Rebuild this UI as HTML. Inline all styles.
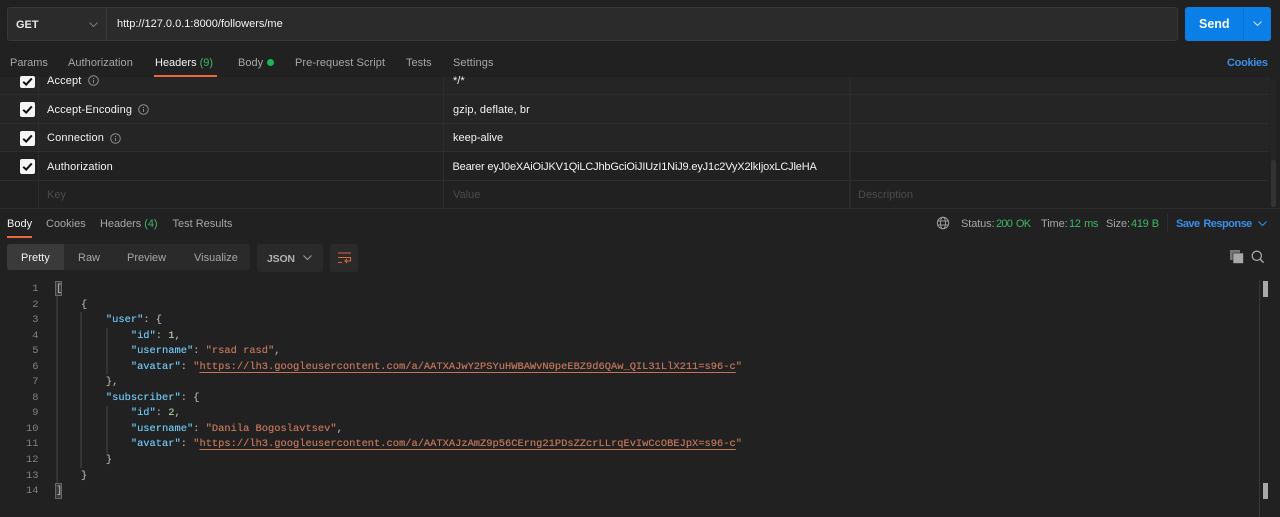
<!DOCTYPE html>
<html><head><meta charset="utf-8"><style>
html,body{margin:0;padding:0;background:#212121;width:1280px;height:517px;overflow:hidden}
body{position:relative;font-family:"Liberation Sans",sans-serif;font-size:11px;color:#a6a6a6}
.t{position:absolute;white-space:pre;line-height:14px}
.b{position:absolute}
.w{color:#f2f2f2}.d{color:#a6a6a6}.g{color:#4b4b4b}.grn{color:#3fb56a}.blu{color:#3a8ee6}
.m{position:absolute;left:56px;white-space:pre;font-family:"Liberation Mono",monospace;font-size:10.4px;line-height:15px;color:#a8a8a8;text-shadow:0 0 .4px currentColor}
.n{position:absolute;width:38.5px;text-align:right;left:0;font-family:"Liberation Mono",monospace;font-size:10.4px;line-height:15px;color:#808080}
.k{color:#6fc3f0}.s{color:#c0745a}.u{color:#c0745a;text-decoration:underline;text-decoration-thickness:1px;text-underline-offset:2.5px}.v{color:#a8c8a0}
.cb{position:absolute;left:19.5px;width:15px;height:15px;background:#f5f5f5;border-radius:2px;overflow:hidden}
.cb svg{position:absolute;left:0;top:0}
.i{position:absolute}
.h{letter-spacing:.13px}
</style></head><body>
<div class="b" style="left:7px;top:7px;width:1171px;height:34px;background:#2b2b2b;border:1px solid #383838;border-radius:3px;box-sizing:border-box"></div>
<div class="b" style="left:106px;top:8px;width:1px;height:32px;background:#383838"></div>
<div class="t" style="left:16px;top:18px;font-weight:bold;color:#e6e6e6;font-size:11px">GET</div>
<svg class="i" style="left:88px;top:20px" width="12" height="10"><path d="M1.5 2.5L5.5 6.5L9.5 2.5" fill="none" stroke="#7a7a7a"/></svg>
<div class="t w" style="left:117px;top:17px">http://127.0.0.1:8000/followers/me</div>
<div class="b" style="left:1185px;top:7px;width:86px;height:34px;background:#0a7fe8;border-radius:3px"></div>
<div class="b" style="left:1243px;top:7px;width:1px;height:34px;background:#0a70d0"></div>
<div class="t" style="left:1199px;top:17px;font-weight:bold;color:#fff;font-size:12.5px">Send</div>
<svg class="i" style="left:1252px;top:19px" width="12" height="10"><path d="M1.5 2.5L5.5 6.5L9.5 2.5" fill="none" stroke="#d5e8fb"/></svg>

<div class="t d" style="left:10px;top:56px">Params</div>
<div class="t d" style="left:68px;top:56px;letter-spacing:.05px">Authorization</div>
<div class="t w" style="left:155px;top:56px">Headers <span class="grn">(9)</span></div>
<div class="b" style="left:154px;top:75px;width:63px;height:2px;background:#e8683f"></div>
<div class="t d" style="left:238px;top:56px">Body</div>
<div class="b" style="left:267px;top:59px;width:7px;height:7px;border-radius:50%;background:#1fb45a"></div>
<div class="t d" style="left:295px;top:56px;letter-spacing:.08px">Pre-request Script</div>
<div class="t d" style="left:406px;top:56px">Tests</div>
<div class="t d" style="left:453px;top:56px;letter-spacing:.1px">Settings</div>
<div class="t blu" style="left:1227px;top:56px;font-weight:bold;letter-spacing:-.3px">Cookies</div>

<div class="b" style="left:0;top:77px;width:1270px;height:75px;background:#252525"></div>
<div class="b" style="left:0;top:152px;width:1270px;height:57px;background:#212121"></div>
<div class="b" style="left:0;top:94px;width:1268px;height:1px;background:#2d2d2d"></div>
<div class="b" style="left:0;top:123px;width:1268px;height:1px;background:#2d2d2d"></div>
<div class="b" style="left:0;top:151px;width:1268px;height:1px;background:#2d2d2d"></div>
<div class="b" style="left:0;top:180px;width:1268px;height:1px;background:#2d2d2d"></div>
<div class="b" style="left:0;top:208px;width:1280px;height:1px;background:#2d2d2d"></div>
<div class="b" style="left:38px;top:77px;width:1px;height:131px;background:#2d2d2d"></div>
<div class="b" style="left:443px;top:77px;width:1px;height:131px;background:#2d2d2d"></div>
<div class="b" style="left:849px;top:77px;width:2px;height:131px;background:#2a2a2a"></div>
<div class="b" style="left:1271px;top:79px;width:5px;height:128px;background:#262626;border-radius:3px"></div>
<div class="b" style="left:1271px;top:160px;width:5px;height:47px;background:#333;border-radius:3px"></div>

<div class="cb" style="top:76px;height:12px"><svg style="top:-2px" width="15" height="15"><path d="M3.2 7.8L6.2 10.6L11.8 4.4" fill="none" stroke="#111" stroke-width="2"/></svg></div>
<div class="cb" style="top:102px"><svg width="15" height="15"><path d="M3.2 7.8L6.2 10.6L11.8 4.4" fill="none" stroke="#111" stroke-width="2"/></svg></div>
<div class="cb" style="top:130.5px"><svg width="15" height="15"><path d="M3.2 7.8L6.2 10.6L11.8 4.4" fill="none" stroke="#111" stroke-width="2"/></svg></div>
<div class="cb" style="top:159px"><svg width="15" height="15"><path d="M3.2 7.8L6.2 10.6L11.8 4.4" fill="none" stroke="#111" stroke-width="2"/></svg></div>

<div class="t w h" style="left:47px;top:74px">Accept</div>
<svg class="i" style="left:88px;top:75px" width="12" height="12"><circle cx="5.5" cy="5.5" r="4.8" fill="none" stroke="#8a8a8a"/><path d="M5.5 3v1M5.5 5v3" stroke="#8a8a8a"/></svg>
<div class="t w h" style="left:47px;top:102.5px">Accept-Encoding</div>
<svg class="i" style="left:138px;top:104px" width="12" height="12"><circle cx="5.5" cy="5.5" r="4.8" fill="none" stroke="#8a8a8a"/><path d="M5.5 3v1M5.5 5v3" stroke="#8a8a8a"/></svg>
<div class="t w h" style="left:47px;top:131px">Connection</div>
<svg class="i" style="left:109.5px;top:132.5px" width="12" height="12"><circle cx="5.5" cy="5.5" r="4.8" fill="none" stroke="#8a8a8a"/><path d="M5.5 3v1M5.5 5v3" stroke="#8a8a8a"/></svg>
<div class="t w h" style="left:47px;top:160px">Authorization</div>
<div class="t g" style="left:47px;top:188px">Key</div>
<div class="t w" style="left:453px;top:74px">*/*</div>
<div class="t w" style="left:453px;top:102.5px;letter-spacing:.1px">gzip, deflate, br</div>
<div class="t w" style="left:453px;top:131px">keep-alive</div>
<div class="t w" style="left:452.5px;top:160px;letter-spacing:-.17px">Bearer eyJ0eXAiOiJKV1QiLCJhbGciOiJIUzI1NiJ9.eyJ1c2VyX2lkIjoxLCJleHA</div>
<div class="t g" style="left:453px;top:188px">Value</div>
<div class="t g" style="left:858px;top:188px">Description</div>

<div class="t w" style="left:7px;top:217px">Body</div>
<div class="b" style="left:7px;top:236px;width:25px;height:2px;background:#e8683f"></div>
<div class="t d" style="left:46px;top:217px">Cookies</div>
<div class="t d" style="left:100px;top:217px;letter-spacing:-.05px">Headers <span class="grn">(4)</span></div>
<div class="t d" style="left:172.5px;top:217px">Test Results</div>

<svg class="i" style="left:936px;top:216px" width="14" height="14"><g fill="none" stroke="#9a9a9a"><circle cx="7" cy="7" r="5.7"/><ellipse cx="7" cy="7" rx="2.6" ry="5.7"/><path d="M1.5 5h11M1.5 9h11"/></g></svg>
<div class="t d" style="left:961px;top:217px;letter-spacing:-.1px">Status:</div>
<div class="t grn" style="left:996px;top:217px;letter-spacing:-.75px;word-spacing:1.5px">200 OK</div>
<div class="t d" style="left:1041px;top:217px;letter-spacing:-.1px">Time:</div>
<div class="t grn" style="left:1069px;top:217px;letter-spacing:-.4px;word-spacing:1px">12 ms</div>
<div class="t d" style="left:1106px;top:217px;letter-spacing:-.1px">Size:</div>
<div class="t grn" style="left:1131px;top:217px;letter-spacing:-.3px;word-spacing:.5px">419 B</div>
<div class="b" style="left:1167px;top:214px;width:1px;height:18px;background:#2d2d2d"></div>
<div class="t blu" style="left:1176px;top:217px;font-weight:bold;letter-spacing:-.52px;word-spacing:1.2px">Save Response</div>
<svg class="i" style="left:1257px;top:219px" width="12" height="10"><path d="M1.5 2.5L5.5 6.5L9.5 2.5" fill="none" stroke="#3a8ee6"/></svg>

<div class="b" style="left:7px;top:244px;width:243px;height:26px;background:#2a2a2a;border-radius:3px"></div>
<div class="b" style="left:7px;top:244px;width:57px;height:26px;background:#3a3a3a;border-radius:3px 0 0 3px"></div>
<div class="t w" style="left:21px;top:251px">Pretty</div>
<div class="t d" style="left:78px;top:251px">Raw</div>
<div class="t d" style="left:127px;top:251px">Preview</div>
<div class="t d" style="left:194px;top:251px">Visualize</div>
<div class="b" style="left:257px;top:244px;width:66px;height:28px;background:#2a2a2a;border-radius:3px"></div>
<div class="t" style="left:267px;top:252px;font-size:10.5px;font-weight:bold;color:#b0b0b0;letter-spacing:-.2px">JSON</div>
<svg class="i" style="left:302px;top:253px" width="12" height="10"><path d="M1.5 2.5L5.5 6.5L9.5 2.5" fill="none" stroke="#9a9a9a"/></svg>
<div class="b" style="left:330px;top:244px;width:28px;height:28px;background:#2a2a2a;border-radius:3px"></div>
<svg class="i" style="left:337.5px;top:252px" width="14" height="13"><g fill="none" stroke="#d9663f"><path d="M0 1h13M0 5.5h12.5v3.5h-5.5M9 7l-2 2 2 2M0 10.5h4" stroke-width="1.1"/></g></svg>

<svg class="i" style="left:1230px;top:250px" width="14" height="14"><rect x="0" y="0" width="10" height="10" fill="#777"/><rect x="3" y="3" width="10.5" height="10.5" fill="#a8a8a8" stroke="#212121" stroke-width=".6"/></svg>
<svg class="i" style="left:1251px;top:250px" width="14" height="14"><circle cx="5.8" cy="5.8" r="4.6" fill="none" stroke="#a8a8a8" stroke-width="1.3"/><path d="M9.2 9.2L12.6 12.6" stroke="#a8a8a8" stroke-width="1.4"/></svg>

<div class="b" style="left:1259px;top:280px;width:1px;height:237px;background:#383838"></div>
<div class="b" style="left:1263px;top:281px;width:5px;height:16px;background:#a8a8a8"></div>
<div class="b" style="left:1263px;top:483px;width:5px;height:16px;background:#a8a8a8"></div>

<div class="b" style="left:56px;top:296px;width:2px;height:187px;background:#343434"></div>
<div class="b" style="left:80px;top:312px;width:2px;height:156px;background:#343434"></div>
<div class="b" style="left:105.5px;top:328px;width:2px;height:46px;background:#343434"></div>
<div class="b" style="left:105.5px;top:406px;width:2px;height:47px;background:#343434"></div>
<div class="b" style="left:55px;top:281px;width:7px;height:15px;border:1px solid #666;background:#3a3a3a;box-sizing:border-box"></div>
<div class="b" style="left:55px;top:483px;width:7px;height:16px;border:1px solid #666;background:#3a3a3a;box-sizing:border-box"></div>

<div class="n" style="top:282px">1</div>
<div class="n" style="top:297.5px">2</div>
<div class="n" style="top:313px">3</div>
<div class="n" style="top:328.6px">4</div>
<div class="n" style="top:344.1px">5</div>
<div class="n" style="top:359.7px">6</div>
<div class="n" style="top:375.2px">7</div>
<div class="n" style="top:390.8px">8</div>
<div class="n" style="top:406.3px">9</div>
<div class="n" style="top:421.9px">10</div>
<div class="n" style="top:437.4px">11</div>
<div class="n" style="top:452.9px">12</div>
<div class="n" style="top:468.5px">13</div>
<div class="n" style="top:484px">14</div>

<div class="m" style="top:282px">[</div>
<div class="m" style="top:297.5px">    {</div>
<div class="m" style="top:313px">        <span class="k">"user"</span>: {</div>
<div class="m" style="top:328.6px">            <span class="k">"id"</span>: <span class="v">1</span>,</div>
<div class="m" style="top:344.1px">            <span class="k">"username"</span>: <span class="s">"rsad rasd"</span>,</div>
<div class="m" style="top:359.7px">            <span class="k">"avatar"</span>: <span class="s">"</span><span class="u">https://lh3.googleusercontent.com/a/AATXAJwY2PSYuHWBAWvN0peEBZ9d6QAw_QIL31LlX211=s96-c</span><span class="s">"</span></div>
<div class="m" style="top:375.2px">        },</div>
<div class="m" style="top:390.8px">        <span class="k">"subscriber"</span>: {</div>
<div class="m" style="top:406.3px">            <span class="k">"id"</span>: <span class="v">2</span>,</div>
<div class="m" style="top:421.9px">            <span class="k">"username"</span>: <span class="s">"Danila Bogoslavtsev"</span>,</div>
<div class="m" style="top:437.4px">            <span class="k">"avatar"</span>: <span class="s">"</span><span class="u">https://lh3.googleusercontent.com/a/AATXAJzAmZ9p56CErng21PDsZZcrLLrqEvIwCcOBEJpX=s96-c</span><span class="s">"</span></div>
<div class="m" style="top:452.9px">        }</div>
<div class="m" style="top:468.5px">    }</div>
<div class="m" style="top:484px">]</div>
</body></html>
